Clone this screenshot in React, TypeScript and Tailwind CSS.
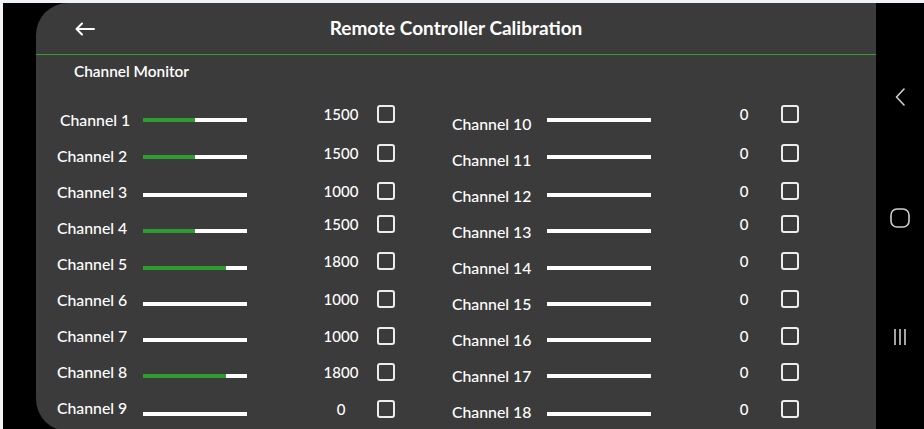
import React from "react";

const leftChannels = [1500, 1500, 1000, 1500, 1800, 1000, 1000, 1800, 0];
const rightChannels = [0, 0, 0, 0, 0, 0, 0, 0, 0];

// the bars and the value rows do not share the label rhythm in the app
const barGaps = ["mt-[29px]", "mt-[33px]", "mt-[34px]", "mt-[32px]", "mt-[33px]", "mt-[32px]", "mt-[32px]", "mt-[32px]", "mt-[34px]"];
const boxGaps = ["mt-[16px]", "mt-[21px]", "mt-[20px]", "mt-[15px]", "mt-[19px]", "mt-[20px]", "mt-[19px]", "mt-[18px]", "mt-[19px]"];

const fillPercent = (v: number) => Math.max(0, Math.min(100, ((v - 1000) / 1000) * 100));

const Bar = ({ value, className }: { value: number; className: string }) => (
  <div className={`h-[4px] w-[104px] bg-white ${className}`}>
    <div className="h-full bg-[#2e9c31]" style={{ width: `${fillPercent(value)}%` }} />
  </div>
);

const Checkbox = () => (
  <div className="w-[18px] h-[18px] border-2 border-[#ececec] rounded-[3px]" />
);

interface ColumnProps {
  values: number[];
  start: number;
  labelPad: string;
  labelWidth: string;
  valueGap: string;
  boxGap: string;
}

const ChannelColumn: React.FC<ColumnProps> = ({ values, start, labelPad, labelWidth, valueGap, boxGap }) => (
  <div className="flex">
    <div className={`flex flex-col ${labelPad} ${labelWidth}`}>
      {values.map((_, i) => (
        <div
          key={i}
          className={`h-[36px] flex items-center text-[15.8px] font-medium text-white ${i + start === 1 ? "pl-[3px]" : ""}`}
        >
          Channel {i + start}
        </div>
      ))}
    </div>
    <div className="flex flex-col">
      {values.map((v, i) => (
        <Bar key={i} value={v} className={barGaps[i]} />
      ))}
    </div>
    <div className={`flex flex-col ${valueGap}`}>
      {values.map((v, i) => (
        <div key={i} className={`flex items-center h-[18px] ${boxGaps[i]}`}>
          <span className="w-[60px] text-center text-[15px] font-medium text-white">{v}</span>
          <div className={boxGap}>
            <Checkbox />
          </div>
        </div>
      ))}
    </div>
  </div>
);

const NavBar = () => (
  <div className="w-[48px] bg-black flex flex-col items-center text-[#cfcfcf]">
    <svg className="mt-[85px]" width="10" height="18" viewBox="0 0 10 18" fill="none">
      <polyline points="9,1 1.5,9 9,17" stroke="currentColor" strokeWidth="1.6" strokeLinecap="round" strokeLinejoin="round" />
    </svg>
    <svg className="mt-[102px]" width="20" height="20" viewBox="0 0 20 20" fill="none">
      <rect x="1" y="1" width="18" height="18" rx="6" stroke="currentColor" strokeWidth="1.6" />
    </svg>
    <svg className="mt-[100px]" width="14" height="18" viewBox="0 0 14 18" fill="none">
      <line x1="2" y1="1" x2="2" y2="17" stroke="currentColor" strokeWidth="1.6" />
      <line x1="7" y1="1" x2="7" y2="17" stroke="currentColor" strokeWidth="1.6" />
      <line x1="12" y1="1" x2="12" y2="17" stroke="currentColor" strokeWidth="1.6" />
    </svg>
  </div>
);

export default function App() {
  return (
    <div className="w-[924px] h-[429px] overflow-hidden bg-[#eef2f7] flex flex-col font-[family-name:Lato,'Noto_Sans',sans-serif]">
      <div className="h-[3px] shrink-0" />
      <div className="flex flex-1 min-h-0">
        <div className="w-[3px] bg-[#f4f4f4]" />
        <div className="flex-1 flex bg-black">
          <div className="ml-[33px] w-[840px] h-[428px] shrink-0 bg-[#3b3b3b] rounded-l-[32px] flex flex-col">
            <div className="h-[52px] shrink-0 grid grid-cols-[1fr_auto_1fr] items-center border-b border-[#2f9f2f]">
              <div className="pl-[39px] flex items-center">
                <svg width="20" height="14" viewBox="0 0 20 14" fill="none">
                  <path d="M19 7H1.5M7 1.5 1.5 7 7 12.5" stroke="white" strokeWidth="2" strokeLinecap="round" strokeLinejoin="round" />
                </svg>
              </div>
              <h1 className="text-[19px] font-bold text-white">Remote Controller Calibration</h1>
              <div />
            </div>
            <div className="h-[34px] shrink-0 flex items-center pl-[38px] text-[15.4px] font-semibold text-white">
              Channel Monitor
            </div>
            <div className="flex pl-[21px]">
              <ChannelColumn
                values={leftChannels}
                start={1}
                labelPad="pt-[13px]"
                labelWidth="w-[86px]"
                valueGap="ml-[64px]"
                boxGap="ml-[6px]"
              />
              <div className="ml-[57px]">
                <ChannelColumn
                  values={rightChannels}
                  start={10}
                  labelPad="pt-[17px]"
                  labelWidth="w-[95px]"
                  valueGap="ml-[63px]"
                  boxGap="ml-[7px]"
                />
              </div>
            </div>
          </div>
          <NavBar />
        </div>
      </div>
    </div>
  );
}
